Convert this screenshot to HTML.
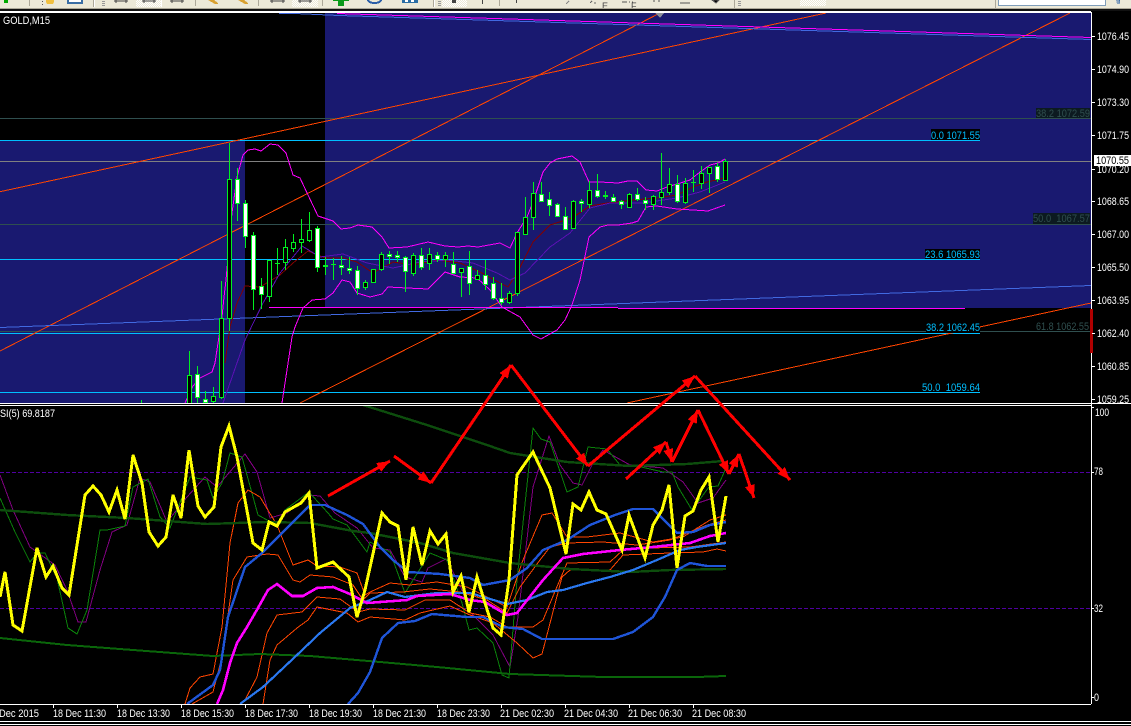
<!DOCTYPE html>
<html><head><meta charset="utf-8"><title>GOLD,M15</title>
<style>
html,body{margin:0;padding:0;background:#000;width:1131px;height:726px;overflow:hidden}
svg{display:block;shape-rendering:crispEdges}
text{font-family:"Liberation Sans",sans-serif;font-size:11px;white-space:pre}
.l{fill:none;stroke-linejoin:round}
.c{shape-rendering:crispEdges}
</style></head><body>
<svg width="1131" height="726" viewBox="0 0 1131 726" xmlns="http://www.w3.org/2000/svg">
<defs>
<clipPath id="m"><rect x="0" y="13" width="1091" height="390"/></clipPath>
<clipPath id="r"><rect x="0" y="406" width="1091" height="298"/></clipPath>
<clipPath id="tb"><rect x="0" y="0" width="1131" height="8"/></clipPath>
<pattern id="ck" width="2" height="2" patternUnits="userSpaceOnUse"><rect width="2" height="2" fill="#fff"/><rect width="1" height="1" fill="#ece9d8"/><rect x="1" y="1" width="1" height="1" fill="#ece9d8"/></pattern>
<marker id="a" markerUnits="userSpaceOnUse" markerWidth="15" markerHeight="13" refX="13" refY="6.5" orient="auto"><path d="M0 1.5L13 6.5L0 11.5z" fill="#f00"/></marker>
</defs>

<rect width="1131" height="726" fill="#000"/>

<!-- toolbar -->
<rect width="1131" height="8" fill="#ece9d8"/>
<rect y="8" width="1131" height="1" fill="#aca899"/>
<rect y="9" width="1131" height="2" fill="#111"/>
<rect y="11" width="1091" height="2" fill="#fff"/>
<g clip-path="url(#tb)" class="c">
<rect x="4" y="0" width="4" height="3" fill="#0a0"/>
<rect x="29" y="0" width="1" height="6" fill="#aca899"/>
<rect x="42" y="1" width="1" height="1" fill="#555"/><rect x="42" y="4" width="1" height="1" fill="#555"/>
<path d="M46 0h8v2l-1 2h-6l-1-2z" fill="#f0c040"/>
<rect x="67" y="0" width="16" height="4" fill="#3a6ea5"/><rect x="69" y="0" width="12" height="2" fill="#fff"/>
<rect x="93" y="0" width="1" height="7" fill="#aca899"/><rect x="94" y="0" width="1" height="7" fill="#fff"/>
<rect x="102" y="1" width="3" height="1" fill="#999"/><rect x="102" y="3" width="3" height="1" fill="#999"/><rect x="102" y="5" width="3" height="1" fill="#999"/>
<rect x="136" y="0" width="26" height="7" fill="url(#ck)"/><rect x="161" y="0" width="1" height="7" fill="#fff"/>
<path d="M114 1h14M116 0v3M126 0v3M142 1h14M144 0v3M154 0v3M170 1h14M172 0v3M182 0v3" stroke="#444"/>
<rect x="195" y="0" width="1" height="6" fill="#aca899"/>
<path d="M208 0h6l4 3v1h-3zM238 0h6l4 3v1h-3z" fill="#d8a030"/>
<rect x="258" y="0" width="1" height="6" fill="#aca899"/>
<rect x="292" y="0" width="26" height="7" fill="url(#ck)" opacity=".9"/>
<path d="M270 1h15M272 0v3M283 0v3M298 1h14M300 0v3M310 0v3" stroke="#444"/>
<rect x="322" y="0" width="1" height="6" fill="#aca899"/>
<path d="M333 0h16v1h-5v5h-6v-5h-5z" fill="#0a9a1a"/>
<path d="M368 0c1 4 12 4 13 0" fill="none" stroke="#2a5ea8" stroke-width="2"/>
<rect x="402" y="0" width="16" height="3" fill="#2a6ea5"/><rect x="405" y="0" width="3" height="2" fill="#fff"/><rect x="411" y="0" width="3" height="2" fill="#fff"/>
<rect x="433" y="0" width="1" height="7" fill="#aca899"/><rect x="434" y="0" width="1" height="7" fill="#fff"/>
<rect x="438" y="1" width="3" height="1" fill="#999"/><rect x="438" y="3" width="3" height="1" fill="#999"/><rect x="438" y="5" width="3" height="1" fill="#999"/>
<rect x="442" y="0" width="25" height="7" fill="url(#ck)"/><rect x="452" y="0" width="4" height="3" fill="#444"/>
<rect x="482" y="0" width="1" height="4" fill="#444"/><rect x="499" y="0" width="1" height="6" fill="#aca899"/><rect x="516" y="0" width="1" height="3" fill="#444"/>
<path d="M566 4l3-3" stroke="#888"/>
<path d="M590 3l2-2M594 3h2" stroke="#666"/>
<path d="M622 2h5M629 2h1M632 2h1M653 1h2M658 1h2M680 3h10M712 0h7l-3 3z" stroke="#555"/>
<rect x="734" y="0" width="1" height="8" fill="#aca899"/>
<rect x="738" y="1" width="3" height="1" fill="#999"/><rect x="738" y="3" width="3" height="1" fill="#999"/><rect x="738" y="5" width="3" height="1" fill="#999"/>
<rect x="800" y="0" width="26" height="6" fill="url(#ck)"/>
<rect x="995" y="0" width="1" height="8" fill="#aca899"/>
<rect x="998" y="0" width="108" height="6" fill="#7f9db9"/><rect x="999" y="0" width="106" height="5" fill="#fff"/>
<rect x="1119" y="0" width="1" height="3" fill="#3a6ea5"/>
<path d="M1116 0h3l1 4h-3z" fill="#8aa4c0"/>
</g>
<text x="602" y="9" fill="#444" clip-path="url(#tb)" style="font-size:9px">E</text>
<text x="631" y="9" fill="#444" clip-path="url(#tb)" style="font-size:9px">F</text>

<!-- main chart backgrounds -->
<rect x="0" y="141" width="245" height="262" fill="#191970"/>
<rect x="325" y="13" width="766" height="295" fill="#191970"/>

<g clip-path="url(#m)">
<!-- horizontal levels -->
<g class="c" fill="none">
<path d="M0 118.5H1091M0 224.5H1091M0 331.5H1091" stroke="#2f4f4f"/>
<path d="M0 140.5H980M0 259.5H980M0 333.5H980M0 392.5H980" stroke="#00bfff"/>
<path d="M0 161.5H1091" stroke="#808080"/>
</g>
<!-- trend lines -->
<g class="c" fill="none" stroke="#ff4500">
<path d="M0 191.7L826 13"/>
<path d="M0 351L660 13"/>
<path d="M300 403L1070 13"/>
<path d="M627 403L1091 303"/>
</g>
<g class="c" fill="none">
<path d="M279 13.5H295L339 15.5L1091 39.5" stroke="#4169e1"/>
<path d="M337 13.5L1091 37.5" stroke="#ff00ff"/>
<path d="M0 327.5L1091 285.5" stroke="#4169e1"/>
<path d="M269 307.5H618M618 308.5H965" stroke="#ff00ff"/>
</g>
<path d="M655 13h9l-4 5z" fill="#8b8f99"/>

<!-- MA lines -->
<polyline class="l" stroke="#800000" points="225,363 230,327 237,303 245,286 260,287 280,275 293,263 308,251 325,258 343,258 357,262 373,273 393,262 413,265 437,260 460,263 480,272 500,283 508,287 517,273 533,242 550,225 572,218 590,206 607,203 633,200 657,198 677,195 693,187 707,182 725,178"/>
<polyline class="l" stroke="#5a10b4" points="223,403 245,340 263,303 280,273 302,246 320,257 343,254 367,263 393,268 420,262 447,260 473,263 497,273 510,280 525,273 550,247 570,233 590,208 610,203 643,203 677,198 700,192 725,182"/>
<!-- bollinger -->
<polyline class="l" stroke="#ff00ff" points="185,403 193,386 200,378 212,372 215,363 218,343 222,317 224,297 226,280 232,213 237,177 243,155 248,150 255,149 261,151 270,144 278,145 286,153 293,175 300,178 308,195 318,216 333,221 341,229 350,228 358,225 372,227 382,237 389,248 407,247 428,242 445,246 458,247 468,246 478,247 500,243 510,248 517,233 527,217 533,202 543,172 550,163 557,159 572,156 580,162 589,182 600,182 618,183 628,181 637,181 646,190 657,191 667,187 677,184 690,180 700,172 710,165 718,163 725,159"/>
<polyline class="l" stroke="#ff00ff" points="282,403 285,383 292,337 295,327 303,308 312,300 325,299 333,293 342,280 350,282 357,293 370,297 382,294 388,287 407,288 428,289 445,272 460,277 477,278 490,290 502,307 520,317 533,335 541,339 557,330 565,320 572,305 580,280 589,237 600,227 608,225 618,225 632,223 638,221 646,207 657,206 677,209 693,210 708,211 725,205"/>

<!-- candles -->
<path class="c" fill="none" stroke="#00f020" d="M141.5 400V403M189.5 351V403M197.5 366V403M205.5 391V403M213.5 387V403M221.5 281V399M229.5 143V331M237.5 168V221M245.5 200V248M253.5 232V310M261.5 278V309M269.5 260V302M277.5 248V275M285.5 239V270M293.5 234V252M301.5 219V253M309.5 212V242M317.5 226V272M325.5 257V275M333.5 258V280M341.5 256V275M349.5 257V274M357.5 266V295M365.5 280V290M373.5 269V283M381.5 252V271M389.5 251V264M397.5 251V262M405.5 256V292M413.5 253V276M421.5 248V270M429.5 248V270M437.5 252V262M445.5 252V267M453.5 252V273M461.5 268V297M469.5 251V295M477.5 270V279M485.5 260V290M493.5 277V300M501.5 283V305M509.5 291V304M517.5 232V296M525.5 197V235M533.5 182V230M541.5 182V201M549.5 192V216M557.5 203V217M565.5 207V230M573.5 200V229M581.5 199V212M589.5 181V208M597.5 174V198M605.5 191V199M613.5 194V202M621.5 200V209M629.5 193V208M637.5 188V201M645.5 197V210M653.5 195V210M661.5 153V205M669.5 168V195M677.5 175V203M685.5 178V204M693.5 170V192M701.5 166V189M709.5 167V193M717.5 163V182M725.5 159V181"/>
<path class="c" fill="none" stroke="#00f020" d="M275 263.5H280M331 264.5H336M691 182.5H696"/>
<path class="c" fill="none" stroke="#00f020" stroke-width="2" d="M323 266H328M603 196H608"/>
<g class="c" stroke="#00f020" fill="#000">
<rect x="187.5" y="375.5" width="4" height="30"/>
<rect x="211.5" y="396.5" width="4" height="5"/>
<rect x="219.5" y="318.5" width="4" height="79"/>
<rect x="227.5" y="179.5" width="4" height="139"/>
<rect x="267.5" y="260.5" width="4" height="36"/>
<rect x="283.5" y="247.5" width="4" height="15"/>
<rect x="291.5" y="242.5" width="4" height="6"/>
<rect x="299.5" y="239.5" width="4" height="3"/>
<rect x="307.5" y="230.5" width="4" height="10"/>
<rect x="363.5" y="282.5" width="4" height="5"/>
<rect x="371.5" y="269.5" width="4" height="13"/>
<rect x="379.5" y="254.5" width="4" height="15"/>
<rect x="411.5" y="255.5" width="4" height="18"/>
<rect x="427.5" y="254.5" width="4" height="9"/>
<rect x="443.5" y="255.5" width="4" height="4"/>
<rect x="459.5" y="268.5" width="4" height="4"/>
<rect x="475.5" y="275.5" width="4" height="4"/>
<rect x="507.5" y="293.5" width="4" height="9"/>
<rect x="515.5" y="232.5" width="4" height="61"/>
<rect x="523.5" y="217.5" width="4" height="17"/>
<rect x="531.5" y="193.5" width="4" height="24"/>
<rect x="571.5" y="201.5" width="4" height="27"/>
<rect x="587.5" y="190.5" width="4" height="14"/>
<rect x="627.5" y="194.5" width="4" height="13"/>
<rect x="651.5" y="196.5" width="4" height="8"/>
<rect x="659.5" y="192.5" width="4" height="5"/>
<rect x="667.5" y="184.5" width="4" height="8"/>
<rect x="683.5" y="183.5" width="4" height="19"/>
<rect x="699.5" y="173.5" width="4" height="10"/>
<rect x="707.5" y="167.5" width="4" height="6"/>
<rect x="723.5" y="161.5" width="4" height="19"/>
</g>
<g class="c" stroke="#00f020" fill="#fff">
<rect x="195.5" y="374.5" width="4" height="23"/>
<rect x="203.5" y="399.5" width="4" height="3"/>
<rect x="235.5" y="179.5" width="4" height="24"/>
<rect x="243.5" y="203.5" width="4" height="33"/>
<rect x="251.5" y="235.5" width="4" height="54"/>
<rect x="259.5" y="286.5" width="4" height="8"/>
<rect x="315.5" y="228.5" width="4" height="39"/>
<rect x="339.5" y="265.5" width="4" height="2"/>
<rect x="347.5" y="268.5" width="4" height="2"/>
<rect x="355.5" y="270.5" width="4" height="18"/>
<rect x="387.5" y="254.5" width="4" height="2"/>
<rect x="395.5" y="255.5" width="4" height="2"/>
<rect x="403.5" y="257.5" width="4" height="14"/>
<rect x="419.5" y="255.5" width="4" height="12"/>
<rect x="435.5" y="255.5" width="4" height="4"/>
<rect x="451.5" y="264.5" width="4" height="9"/>
<rect x="467.5" y="266.5" width="4" height="17"/>
<rect x="483.5" y="275.5" width="4" height="9"/>
<rect x="491.5" y="283.5" width="4" height="15"/>
<rect x="499.5" y="298.5" width="4" height="4"/>
<rect x="539.5" y="194.5" width="4" height="7"/>
<rect x="547.5" y="199.5" width="4" height="6"/>
<rect x="555.5" y="204.5" width="4" height="12"/>
<rect x="563.5" y="216.5" width="4" height="13"/>
<rect x="579.5" y="201.5" width="4" height="2"/>
<rect x="595.5" y="190.5" width="4" height="6"/>
<rect x="611.5" y="197.5" width="4" height="4"/>
<rect x="619.5" y="201.5" width="4" height="3"/>
<rect x="635.5" y="194.5" width="4" height="5"/>
<rect x="643.5" y="200.5" width="4" height="3"/>
<rect x="675.5" y="184.5" width="4" height="17"/>
<rect x="715.5" y="166.5" width="4" height="13"/>
</g>
</g>

<!-- fib labels -->
<g>
<rect x="1036" y="108" width="54" height="10" fill="#0c1a20"/>
<text x="1036" y="117" fill="#2f4f4f" textLength="54" lengthAdjust="spacingAndGlyphs">38.2 1072.59</text>
<rect x="931" y="129" width="49" height="11" fill="#000"/>
<text x="931" y="139" fill="#00bfff" textLength="49" lengthAdjust="spacingAndGlyphs">0.0 1071.55</text>
<rect x="1033" y="213" width="57" height="11" fill="#0c1a20"/>
<text x="1033" y="222" fill="#2f4f4f" textLength="57" lengthAdjust="spacingAndGlyphs">50.0  1067.57</text>
<rect x="925" y="249" width="55" height="10" fill="#000"/>
<text x="925" y="258" fill="#00bfff" textLength="55" lengthAdjust="spacingAndGlyphs">23.6 1065.93</text>
<rect x="926" y="322" width="54" height="11" fill="#000"/>
<text x="926" y="331" fill="#00bfff" textLength="54" lengthAdjust="spacingAndGlyphs">38.2 1062.45</text>
<text x="1036" y="330" fill="#2f4f4f" textLength="53" lengthAdjust="spacingAndGlyphs">61.8 1062.55</text>
<text x="922" y="391" fill="#00bfff" textLength="58" lengthAdjust="spacingAndGlyphs">50.0  1059.64</text>
</g>
<text x="3" y="24" fill="#fff" textLength="47" lengthAdjust="spacingAndGlyphs">GOLD,M15</text>

<!-- separators -->
<rect y="403" width="1131" height="1" fill="#fff" class="c"/>
<rect y="405" width="1091" height="1" fill="#fff" class="c"/>
<rect x="1091" y="12" width="1" height="692" fill="#fff" class="c"/>
<rect x="1090" y="309" width="3" height="44" fill="#b00000" class="c"/>
<path class="c" stroke="#fff" fill="none" d="M1092 36.5H1095M1092 69.5H1095M1092 102.5H1095M1092 135.5H1095M1092 169.5H1095M1092 201.5H1095M1092 234.5H1095M1092 267.5H1095M1092 300.5H1095M1092 333.5H1095M1092 366.5H1095M1092 399.5H1095M1092 407.5H1094M1092 472.5H1094M1092 608.5H1094M1092 697.5H1094"/>

<!-- price axis -->
<g fill="#fff">
<text x="1097" y="40" textLength="32" lengthAdjust="spacingAndGlyphs">1076.45</text>
<text x="1097" y="73" textLength="32" lengthAdjust="spacingAndGlyphs">1074.90</text>
<text x="1097" y="106" textLength="32" lengthAdjust="spacingAndGlyphs">1073.30</text>
<text x="1097" y="139" textLength="32" lengthAdjust="spacingAndGlyphs">1071.75</text>
<text x="1097" y="173" textLength="32" lengthAdjust="spacingAndGlyphs">1070.20</text>
<text x="1097" y="205" textLength="32" lengthAdjust="spacingAndGlyphs">1068.65</text>
<text x="1097" y="238" textLength="32" lengthAdjust="spacingAndGlyphs">1067.00</text>
<text x="1097" y="271" textLength="32" lengthAdjust="spacingAndGlyphs">1065.50</text>
<text x="1097" y="304" textLength="32" lengthAdjust="spacingAndGlyphs">1063.95</text>
<text x="1097" y="337" textLength="32" lengthAdjust="spacingAndGlyphs">1062.40</text>
<text x="1097" y="370" textLength="32" lengthAdjust="spacingAndGlyphs">1060.85</text>
<text x="1097" y="403" textLength="32" lengthAdjust="spacingAndGlyphs">1059.25</text>
</g>
<rect x="1094" y="155" width="37" height="11" fill="#fff"/>
<text x="1096" y="164" fill="#000" textLength="33" lengthAdjust="spacingAndGlyphs">1070.55</text>

<!-- RSI pane -->
<g clip-path="url(#r)">
<path class="c" fill="none" stroke="#5000a0" stroke-dasharray="4 2" d="M0 472.5H1091M0 608.5H1091"/>
<polyline class="l" stroke="#800080" points="0,475 13,510 30,547 55,565 67,590 78,622 86,622 100,570 112,532 127,525 140,478 150,482 167,522 187,497 205,477 217,487 245,454 257,472 270,518 287,513 308,495 320,496 335,513 357,528 373,548 390,550 405,577 422,582 428,568 446,559 460,585 470,612 493,635 510,667 518,617 533,487 549,436 560,465 573,483 582,485 592,465 603,450 630,465 663,468 683,482 698,503 713,498 726,480"/>
<polyline class="l" stroke="#0a800a" points="0,498 15,532 30,562 37,553 45,553 57,578 68,628 77,634 87,610 100,530 107,530 125,526 133,487 148,479 160,517 170,528 190,477 207,480 213,498 222,483 230,453 242,457 258,515 278,526 285,510 309,492 328,513 333,519 347,525 367,552 370,542 390,552 405,593 430,553 447,560 462,603 469,630 477,628 493,643 502,675 509,678 517,580 533,428 541,439 550,442 567,492 578,487 588,447 607,449 620,465 637,466 663,472 672,472 678,487 692,510 709,487 718,486 726,468"/>
<g fill="none" stroke="#ff4500" stroke-linejoin="round">
<polyline points="185,704 190,688 200,677 213,674 222,627 230,543 238,503 248,490 260,497 277,525 293,565 308,560 317,566 340,567 357,573 365,595 370,592 390,583 410,585 437,582 467,587 487,597 507,607 523,560 542,515 552,513 567,537 587,537 620,533 653,542 683,537 710,520 726,515"/>
<polyline points="192,704 213,692 222,657 233,580 247,557 267,554 278,555 293,580 300,582 310,575 333,577 353,585 363,600 370,593 403,592 430,589 460,592 487,600 507,613 520,587 540,560 550,547 567,543 603,542 637,545 670,540 707,525 726,520"/>
<polyline points="245,700 257,677 267,633 277,615 302,612 317,597 340,599 358,612 370,609 405,610 425,600 450,600 470,613 490,617 507,627 533,627 543,620 567,563 610,562 623,550 650,548 690,547 726,542"/>
<polyline points="263,704 270,660 277,645 297,628 308,620 317,607 347,613 358,622 370,617 405,620 420,613 450,606 470,615 493,623 517,643 533,658 542,654 562,577 570,570 610,570 623,555 670,553 703,552 717,549 726,551"/>
</g>
<g fill="none" stroke-linejoin="round">
<polyline stroke="#0d4d0d" stroke-width="2.4" points="0,510 67,515 127,518 207,524 267,522 310,523 353,531 370,533 420,543 453,553 510,563 570,569 630,572 670,570 726,569"/>
<polyline stroke="#0d4d0d" stroke-width="2.4" points="363,405 427,425 487,445 510,453 567,462 630,466 687,464 723,461"/>
<polyline stroke="#0a660a" stroke-width="2" points="0,638 67,645 133,650 213,656 260,654 310,656 380,662 437,667 510,674 603,677 697,677 726,676"/>
<polyline stroke="#1f55d8" stroke-width="2.4" points="187,704 213,685 220,670 228,617 245,567 262,553 310,505 325,505 347,515 363,524 380,547 393,560 408,572 440,574 470,578 483,585 510,580 527,568 543,550 567,540 590,525 615,515 633,509 653,509 677,533 693,532 710,525 726,522"/>
<polyline stroke="#1f55d8" stroke-width="2.4" points="348,704 358,693 370,672 382,638 398,623 415,621 432,614 467,617 483,617 503,627 523,629 542,639 583,639 613,639 633,632 653,617 665,597 677,570 690,563 707,566 726,566"/>
<polyline stroke="#2a78f0" stroke-width="2.2" points="240,704 263,687 297,655 320,633 350,608 370,600 387,592 405,597 437,593 470,593 507,604 527,600 547,592 563,590 587,583 610,577 633,570 657,560 680,550 697,547 726,543"/>
<polyline stroke="#ff00ff" stroke-width="2.6" points="217,704 223,690 230,663 237,643 247,627 258,608 268,590 277,584 292,596 303,596 317,588 333,587 350,594 367,603 407,600 417,596 450,594 470,600 485,602 507,615 517,613 543,580 563,558 583,554 620,550 653,547 690,543 710,536 726,533"/>
<polyline stroke="#ffff00" stroke-width="3" stroke-linejoin="miter" points="0,597 5,572 13,625 22,631 37,548 46,577 53,566 62,588 69,595 85,495 93,486 101,495 109,512 117,490 125,519 133,455 142,483 149,532 158,546 166,537 173,495 181,518 189,450 198,506 205,517 214,507 221,447 229,426 237,457 253,543 262,550 269,522 277,526 285,512 301,503 309,493 317,568 333,562 349,577 357,617 365,590 382,513 390,522 398,526 406,580 413,527 422,565 430,531 438,544 446,534 453,592 461,576 469,612 477,577 485,603 493,628 501,635 509,580 517,475 533,452 550,488 566,554 573,504 581,510 589,492 597,510 606,514 622,550 629,515 645,558 653,525 662,510 669,485 677,568 685,516 693,511 701,490 709,477 718,542 726,496"/>
</g>
</g>
<rect y="704" width="1091" height="1" fill="#fff" class="c"/>
<text x="0" y="417" fill="#fff" textLength="55" lengthAdjust="spacingAndGlyphs">SI(5) 69.8187</text>
<g fill="#fff">
<text x="1095" y="416" textLength="14" lengthAdjust="spacingAndGlyphs">100</text>
<text x="1094" y="475" textLength="9" lengthAdjust="spacingAndGlyphs">78</text>
<text x="1094" y="612" textLength="9" lengthAdjust="spacingAndGlyphs">32</text>
<text x="1094" y="701" textLength="5" lengthAdjust="spacingAndGlyphs">0</text>
</g>

<!-- red arrows -->
<g fill="none" stroke="#f00" stroke-width="3" marker-end="url(#a)">
<line x1="328" y1="496" x2="390" y2="461"/>
<line x1="394" y1="456" x2="431" y2="483"/>
<line x1="431" y1="483" x2="511" y2="365"/>
<line x1="511" y1="365" x2="588" y2="466"/>
<line x1="588" y1="466" x2="695" y2="376"/>
<line x1="695" y1="376" x2="790" y2="480"/>
<line x1="626" y1="479" x2="666" y2="442"/>
<line x1="666" y1="442" x2="672" y2="462"/>
<line x1="672" y1="462" x2="698" y2="410"/>
<line x1="698" y1="410" x2="729" y2="474"/>
<line x1="729" y1="474" x2="739" y2="454"/>
<line x1="739" y1="454" x2="754" y2="498"/>
</g>

<!-- time axis -->
<path class="c" stroke="#fff" fill="none" d="M53.5 705V708M117.5 705V708M181.5 705V708M245.5 705V708M309.5 705V708M373.5 705V708M437.5 705V708M501.5 705V708M565.5 705V708M629.5 705V708M693.5 705V708"/>
<g fill="#fff">
<text x="-14" y="717" textLength="53" lengthAdjust="spacingAndGlyphs">18 Dec 2015</text>
<text x="53" y="717" textLength="53" lengthAdjust="spacingAndGlyphs">18 Dec 11:30</text>
<text x="117" y="717" textLength="53" lengthAdjust="spacingAndGlyphs">18 Dec 13:30</text>
<text x="181" y="717" textLength="53" lengthAdjust="spacingAndGlyphs">18 Dec 15:30</text>
<text x="245" y="717" textLength="53" lengthAdjust="spacingAndGlyphs">18 Dec 17:30</text>
<text x="309" y="717" textLength="53" lengthAdjust="spacingAndGlyphs">18 Dec 19:30</text>
<text x="373" y="717" textLength="53" lengthAdjust="spacingAndGlyphs">18 Dec 21:30</text>
<text x="437" y="717" textLength="53" lengthAdjust="spacingAndGlyphs">18 Dec 23:30</text>
<text x="500" y="717" textLength="54" lengthAdjust="spacingAndGlyphs">21 Dec 02:30</text>
<text x="564" y="717" textLength="54" lengthAdjust="spacingAndGlyphs">21 Dec 04:30</text>
<text x="628" y="717" textLength="54" lengthAdjust="spacingAndGlyphs">21 Dec 06:30</text>
<text x="692" y="717" textLength="54" lengthAdjust="spacingAndGlyphs">21 Dec 08:30</text>
</g>
<rect y="721" width="1131" height="1" fill="#fff" class="c"/>
<rect y="724" width="1131" height="1" fill="#fff" class="c"/>
</svg>
</body></html>
